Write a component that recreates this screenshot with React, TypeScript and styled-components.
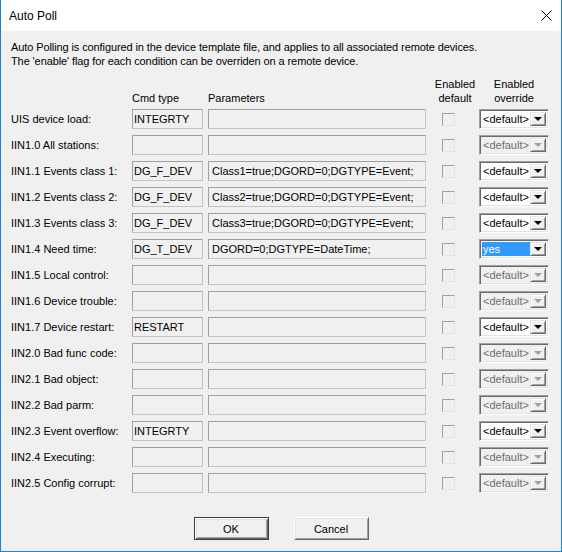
import React from 'react'
import styled, { createGlobalStyle, css } from 'styled-components'

const GlobalStyle = createGlobalStyle`
  html, body {
    margin: 0;
    padding: 0;
    background: #f0f0f0;
  }
  body {
    font-family: "Liberation Sans", Arial, sans-serif;
  }
`

const Window = styled.div`
  display: flex;
  flex-direction: column;
  box-sizing: border-box;
  width: 562px;
  height: 552px;
  border: 1px solid #1883d7;
  border-top: none;
  background: #f0f0f0;
  color: #000;
  font-size: 11px;
`

const TitleBar = styled.div`
  display: flex;
  align-items: center;
  justify-content: space-between;
  height: 31px;
  padding: 0 9px 0 8px;
  background: #fff;
  font-size: 12px;
`

const CloseIcon = styled.svg`
  width: 11px;
  height: 11px;
`

const Content = styled.div`
  display: flex;
  flex-direction: column;
  padding: 9px 10px 0 10px;
`

const Intro = styled.p`
  margin: 0;
  line-height: 14px;
  letter-spacing: -0.1px;
  white-space: nowrap;
`

const Table = styled.div`
  display: grid;
  grid-template-columns: 121px 76px 223px 48px 70px;
  row-gap: 6px;
  align-items: center;
  margin-top: 9px;
`

const HeadCell = styled.div<{ $center?: boolean }>`
  align-self: end;
  margin-bottom: -2px;
  line-height: 14px;
  white-space: nowrap;
  ${(p) =>
    p.$center &&
    css`
      text-align: center;
    `}
`

const Label = styled.div`
  white-space: nowrap;
`

const Field = styled.div<{ $width: number; $pad: number }>`
  box-sizing: border-box;
  width: ${(p) => p.$width}px;
  height: 20px;
  padding-left: ${(p) => p.$pad}px;
  border: 1px solid;
  border-color: #a0a0a0 #c4c4c4 #c4c4c4 #a0a0a0;
  background: #f0f0f0;
  line-height: 18px;
  white-space: nowrap;
  overflow: hidden;
`

const Check = styled.div`
  box-sizing: border-box;
  width: 13px;
  height: 13px;
  margin-left: 11px;
  border: 1px solid;
  border-color: #a0a0a0 #e3e3e3 #e3e3e3 #a0a0a0;
  background: #f0f0f0;
`

const Combo = styled.div<{ $disabled?: boolean }>`
  display: flex;
  box-sizing: border-box;
  width: 70px;
  height: 20px;
  padding: 2px 2px 2px 2px;
  border: 1px solid;
  border-color: #a0a0a0 #fff #fff #a0a0a0;
  box-shadow: inset 1px 1px #696969, inset -1px -1px #e3e3e3;
  background: ${(p) => (p.$disabled ? '#f0f0f0' : '#fff')};
  color: ${(p) => (p.$disabled ? '#6d6d6d' : '#000')};
`

const ComboText = styled.div<{ $selected?: boolean }>`
  flex: 1;
  padding-left: 1px;
  line-height: 14px;
  white-space: nowrap;
  overflow: hidden;
  ${(p) =>
    p.$selected &&
    css`
      background: #3399ff;
      color: #fff;
    `}
`

const ArrowButton = styled.div<{ $disabled?: boolean }>`
  display: flex;
  align-items: center;
  justify-content: center;
  box-sizing: border-box;
  width: 16px;
  height: 14px;
  border: 1px solid;
  border-color: #e3e3e3 #696969 #696969 #e3e3e3;
  box-shadow: inset 1px 1px #fff, inset -1px -1px #a0a0a0;
  background: #f0f0f0;

  &::after {
    content: '';
    border-left: 4px solid transparent;
    border-right: 4px solid transparent;
    border-top: 4px solid ${(p) => (p.$disabled ? '#a0a0a0' : '#000')};
  }
`

const Buttons = styled.div`
  display: flex;
  justify-content: center;
  gap: 25px;
  margin-top: 24px;
`

const Button = styled.button<{ $default?: boolean }>`
  box-sizing: border-box;
  width: 75px;
  height: 23px;
  padding: 0;
  font-family: inherit;
  font-size: 11px;
  color: #000;
  background: #f0f0f0;
  border: 1px solid;
  ${(p) =>
    p.$default
      ? css`
          border-color: #3c3c3c;
          box-shadow: inset 1px 1px #fff, inset -1px -1px #696969, inset 2px 2px #e3e3e3,
            inset -2px -2px #a0a0a0;
        `
      : css`
          border-color: #fff #696969 #696969 #fff;
          box-shadow: inset 1px 1px #e3e3e3, inset -1px -1px #a0a0a0;
        `}
`

type Row = {
  label: string
  cmd?: string
  params?: string
  enabled?: boolean
  value?: string
}

const rows: Row[] = [
  { label: 'UIS device load:', cmd: 'INTEGRTY', enabled: true },
  { label: 'IIN1.0 All stations:' },
  { label: 'IIN1.1 Events class 1:', cmd: 'DG_F_DEV', params: 'Class1=true;DGORD=0;DGTYPE=Event;', enabled: true },
  { label: 'IIN1.2 Events class 2:', cmd: 'DG_F_DEV', params: 'Class2=true;DGORD=0;DGTYPE=Event;', enabled: true },
  { label: 'IIN1.3 Events class 3:', cmd: 'DG_F_DEV', params: 'Class3=true;DGORD=0;DGTYPE=Event;', enabled: true },
  { label: 'IIN1.4 Need time:', cmd: 'DG_T_DEV', params: 'DGORD=0;DGTYPE=DateTime;', enabled: true, value: 'yes' },
  { label: 'IIN1.5 Local control:' },
  { label: 'IIN1.6 Device trouble:' },
  { label: 'IIN1.7 Device restart:', cmd: 'RESTART', enabled: true },
  { label: 'IIN2.0 Bad func code:' },
  { label: 'IIN2.1 Bad object:' },
  { label: 'IIN2.2 Bad parm:' },
  { label: 'IIN2.3 Event overflow:', cmd: 'INTEGRTY', enabled: true },
  { label: 'IIN2.4 Executing:' },
  { label: 'IIN2.5 Config corrupt:' },
]

const App = () => {
  return (
    <>
      <GlobalStyle />
      <Window>
        <TitleBar>
          <span>Auto Poll</span>
          <CloseIcon viewBox="0 0 11 11">
            <path d="M0.5 0.5 L10.5 10.5 M10.5 0.5 L0.5 10.5" stroke="#000" strokeWidth="1" fill="none" />
          </CloseIcon>
        </TitleBar>
        <Content>
          <Intro>Auto Polling is configured in the device template file, and applies to all associated remote devices.</Intro>
          <Intro>The 'enable' flag for each condition can be overriden on a remote device.</Intro>
          <Table>
            <HeadCell />
            <HeadCell>Cmd type</HeadCell>
            <HeadCell>Parameters</HeadCell>
            <HeadCell $center>
              Enabled
              <br />
              default
            </HeadCell>
            <HeadCell $center>
              Enabled
              <br />
              override
            </HeadCell>
            {rows.map((r) => (
              <React.Fragment key={r.label}>
                <Label>{r.label}</Label>
                <Field $width={71} $pad={1}>{r.cmd}</Field>
                <Field $width={218} $pad={3}>{r.params}</Field>
                <Check />
                <Combo $disabled={!r.enabled}>
                  <ComboText $selected={!!r.value}>{r.value ?? '<default>'}</ComboText>
                  <ArrowButton $disabled={!r.enabled} />
                </Combo>
              </React.Fragment>
            ))}
          </Table>
          <Buttons>
            <Button $default>OK</Button>
            <Button>Cancel</Button>
          </Buttons>
        </Content>
      </Window>
    </>
  )
}

export default App
